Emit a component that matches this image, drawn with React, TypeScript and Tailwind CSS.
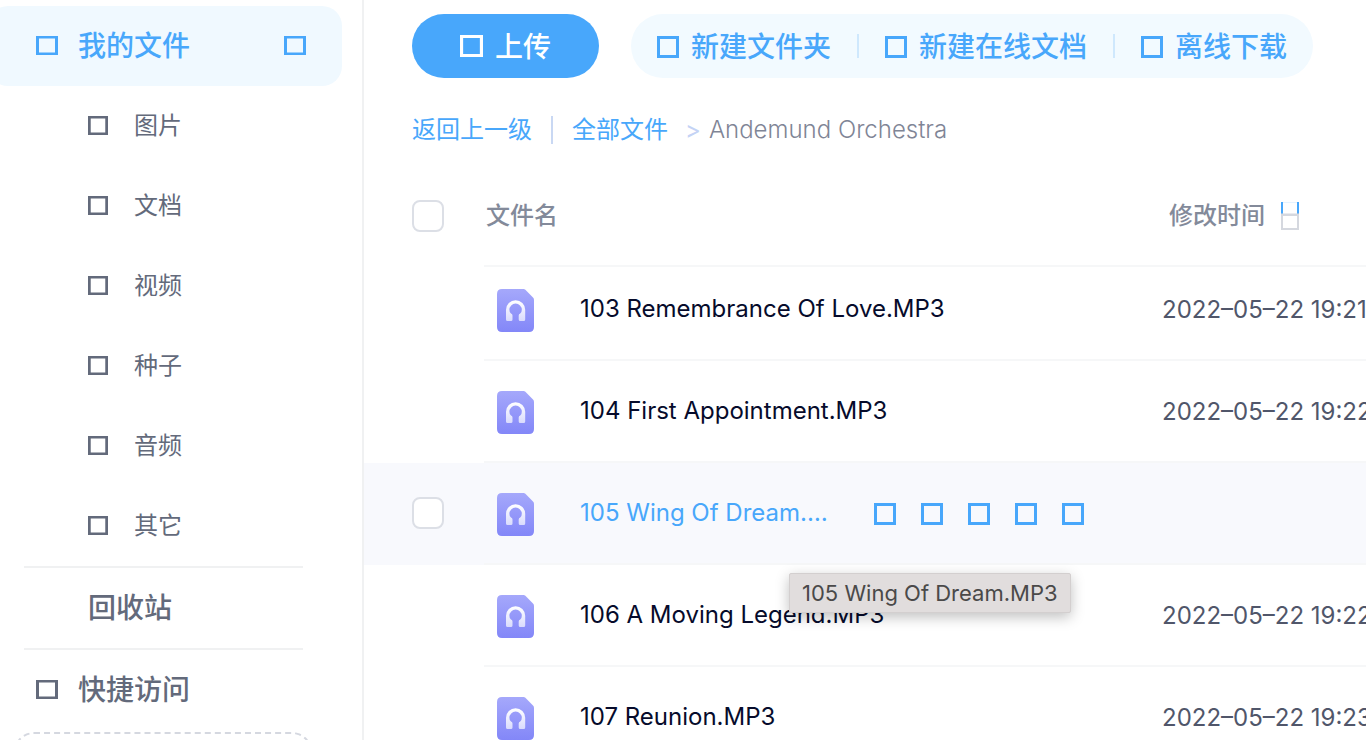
import { useState } from 'react';
import clsx from 'clsx';

interface FileItem {
    name: string;
    modified: string;
}

const categories = ['图片', '文档', '视频', '种子', '音频', '其它'];

const toolbarItems = ['新建文件夹', '新建在线文档', '离线下载'];

const fileActions = ['分享', '下载', '重命名', '删除', '更多'];

const files: FileItem[] = [
    { name: '103 Remembrance Of Love.MP3', modified: '2022–05–22 19:21' },
    { name: '104 First Appointment.MP3', modified: '2022–05–22 19:22' },
    { name: '105 Wing Of Dream.MP3', modified: '2022–05–22 19:22' },
    { name: '106 A Moving Legend.MP3', modified: '2022–05–22 19:22' },
    { name: '107 Reunion.MP3', modified: '2022–05–22 19:23' },
];

const BoxIcon = ({ className }: { className?: string }) => (
    <svg viewBox="0 0 22 20" className={clsx('shrink-0', className)} preserveAspectRatio="none" aria-hidden="true">
        <path d="M0 0H22V20H0ZM3 2.7V17.3H19V2.7Z" fill="currentColor" fillRule="evenodd" />
    </svg>
);

const SortIcon = () => (
    <svg viewBox="0 0 18 28" className="w-[18px] h-7" aria-hidden="true">
        <path d="M0 0H2V12H0ZM16 0H18V12H16Z" fill="#48a7fb" />
        <path d="M2 0H16V1H2Z" fill="#e6f3ff" />
        <path d="M0 11.5H18V28H0ZM2 14V26H16V14Z" fill="#d5d8df" fillRule="evenodd" />
    </svg>
);

const AudioFileIcon = () => (
    <svg viewBox="0 0 37 43" className="w-[37px] h-[43px] shrink-0" aria-hidden="true">
        <defs>
            <linearGradient id="audio-sheet" x1="0" y1="0" x2="0" y2="1">
                <stop offset="0" stopColor="#a5a8fb" />
                <stop offset="1" stopColor="#8387f8" />
            </linearGradient>
            <linearGradient id="audio-phones" x1="0" y1="0" x2="0" y2="1">
                <stop offset="0" stopColor="#ffffff" />
                <stop offset="1" stopColor="#d9dbfd" />
            </linearGradient>
        </defs>
        <path
            d="M5 0H26.5Q27.6 0 28.4 .8L36 8.6Q37 9.6 37 11V38Q37 43 32 43H5Q0 43 0 38V5Q0 0 5 0Z"
            fill="url(#audio-sheet)"
        />
        <path
            d="M9 30.5V20.8A9.6 9.6 0 0 1 28.2 20.8V30.5Q28.2 32 26.7 32H23.2Q21.7 32 21.7 30.5V26.5Q21.7 25 23.2 24.6Q24.8 23.6 24.8 20.8A6.2 6.2 0 0 0 12.4 20.8Q12.4 23.6 14 24.6Q15.5 25 15.5 26.5V30.5Q15.5 32 14 32H10.5Q9 32 9 30.5Z"
            fill="url(#audio-phones)"
        />
    </svg>
);

const Checkbox = ({ label }: { label: string }) => (
    <input
        type="checkbox"
        aria-label={label}
        className="block w-8 h-8 appearance-none rounded-lg border-2 border-[#dcdfe6] bg-white checked:bg-[#48a7fb]"
    />
);

const Sidebar = () => (
    <aside className="w-[364px] shrink-0 overflow-hidden border-r-2 border-[#f0f1f2] pt-1.5 text-[#636a7b]">
        <nav>
            <a
                href="#files"
                className="-ml-3 mr-5 flex h-20 items-center rounded-[20px] bg-[#f0f9ff] pl-12 pr-9 text-[28px] font-medium text-[#48a7fb]"
            >
                <BoxIcon className="mb-0.5 w-[22px] h-[19px]" />
                <span className="ml-5 flex-1">我的文件</span>
                <BoxIcon className="mb-0.5 w-[22px] h-[19px]" />
            </a>
            <ul>
                {categories.map((category) => (
                    <li key={category}>
                        <a href="#category" className="flex h-20 items-center gap-[26px] pl-[88px] text-2xl">
                            <BoxIcon className="mb-0.5 w-5 h-[19px]" />
                            {category}
                        </a>
                    </li>
                ))}
            </ul>
            <div className="ml-6 mr-[59px] border-y-2 border-[#f0f1f2]">
                <a href="#recycle" className="flex h-20 items-center pl-16 text-[28px] font-medium">
                    回收站
                </a>
            </div>
            <a href="#quick" className="flex h-20 items-center gap-5 pl-9 text-[28px] font-medium">
                <BoxIcon className="mb-0.5 w-[22px] h-[19px]" />
                快捷访问
            </a>
        </nav>
        <div className="ml-3.5 mr-[50px] mt-0.5 h-40 rounded-[20px] border-2 border-dashed border-[#d5d8e0]" />
    </aside>
);

const Toolbar = () => (
    <div className="flex gap-8 whitespace-nowrap text-[28px] font-medium">
        <button className="flex h-16 items-center gap-3 rounded-full bg-[#48a7fb] px-12 pt-0.5 text-white">
            <BoxIcon className="mb-0.5 w-[23px] h-[22px]" />
            上传
        </button>
        <div className="flex h-16 items-center rounded-full bg-[#f2faff] text-[#48a7fb]">
            {toolbarItems.map((item, i) => (
                <div key={item} className="flex items-center">
                    {i > 0 && <span className="h-6 w-0.5 bg-[#cfe8fd]" />}
                    <button className="flex items-center gap-3 px-[26px] pt-0.5">
                        <BoxIcon className="w-[22px] h-[22px]" />
                        {item}
                    </button>
                </div>
            ))}
        </div>
    </div>
);

const Breadcrumb = () => (
    <div className="mt-8 flex h-10 items-center whitespace-nowrap text-2xl text-[#48a7fb]">
        <a href="#up">返回上一级</a>
        <span className="mx-[19px] h-7 w-0.5 bg-[#c9d8f3]" />
        <a href="#all">全部文件</a>
        <span className="ml-[17px] mr-2 text-[#c4d3f5]">&gt;</span>
        <span className="font-light text-[#7f8596]">Andemund Orchestra</span>
    </div>
);

interface FileRowProps {
    file: FileItem;
    first: boolean;
    active: boolean;
    onEnter: () => void;
}

const FileRow = ({ file, first, active, onEnter }: FileRowProps) => (
    <tr className={clsx(first ? 'h-[94px]' : 'h-[102px]', active && 'bg-[#f8f9fd]')} onMouseEnter={onEnter}>
        <td className="pb-9 pl-12 align-bottom">{active && <Checkbox label={file.name} />}</td>
        <td className="border-b-2 border-[#f6f7f8] pb-[27px] align-bottom">
            <div className="relative flex items-center pl-[13px]">
                <AudioFileIcon />
                <a
                    href="#file"
                    className={clsx('ml-[46px] truncate pb-1', active ? 'w-[256px] text-[#48a7fb]' : 'text-[#060b2b]')}
                >
                    {file.name}
                </a>
                {active && (
                    <>
                        <div className="mb-0.5 ml-[38px] flex gap-[25px] text-[#48a7fb]">
                            {fileActions.map((action) => (
                                <button key={action} aria-label={action}>
                                    <BoxIcon className="w-[22px] h-[22px]" />
                                </button>
                            ))}
                        </div>
                        <div
                            role="tooltip"
                            className="absolute left-[305px] top-20 z-10 rounded-xs border border-[#d3cfcf] bg-[#e1dddd] px-3 py-0.5 text-[22px] leading-[34px] whitespace-nowrap text-[#4a4949] shadow-[0_4px_14px_rgba(0,0,0,0.25)]"
                        >
                            {file.name}
                        </div>
                    </>
                )}
            </div>
        </td>
        <td className="border-b-2 border-[#f6f7f8] pb-[33px] align-bottom whitespace-nowrap text-[#50566a]">
            {!active && file.modified}
        </td>
    </tr>
);

const App = () => {
    const [activeRow, setActiveRow] = useState(2);

    return (
        <div className="flex h-screen overflow-hidden bg-white font-['Inter','Noto_Sans_CJK_SC',sans-serif]">
            <Sidebar />
            <main className="min-w-0 flex-1 overflow-hidden pt-3.5">
                <div className="pl-12">
                    <Toolbar />
                    <Breadcrumb />
                </div>
                <table className="mt-4 w-full table-fixed border-separate border-spacing-0 text-2xl">
                    <thead>
                        <tr className="h-[101px] text-left text-[#838a9a]">
                            <th className="w-[120px] pb-0.5 pl-12">
                                <Checkbox label="全选" />
                            </th>
                            <th className="border-b-2 border-[#f6f7f8] pl-0.5 font-medium">文件名</th>
                            <th className="w-[204px] border-b-2 border-[#f6f7f8] font-medium">
                                <button className="flex items-center gap-4 pl-[7px] whitespace-nowrap">
                                    修改时间
                                    <SortIcon />
                                </button>
                            </th>
                        </tr>
                    </thead>
                    <tbody>
                        {files.map((file, i) => (
                            <FileRow
                                key={file.name}
                                file={file}
                                first={i === 0}
                                active={i === activeRow}
                                onEnter={() => setActiveRow(i)}
                            />
                        ))}
                    </tbody>
                </table>
            </main>
        </div>
    );
};

export default App;
